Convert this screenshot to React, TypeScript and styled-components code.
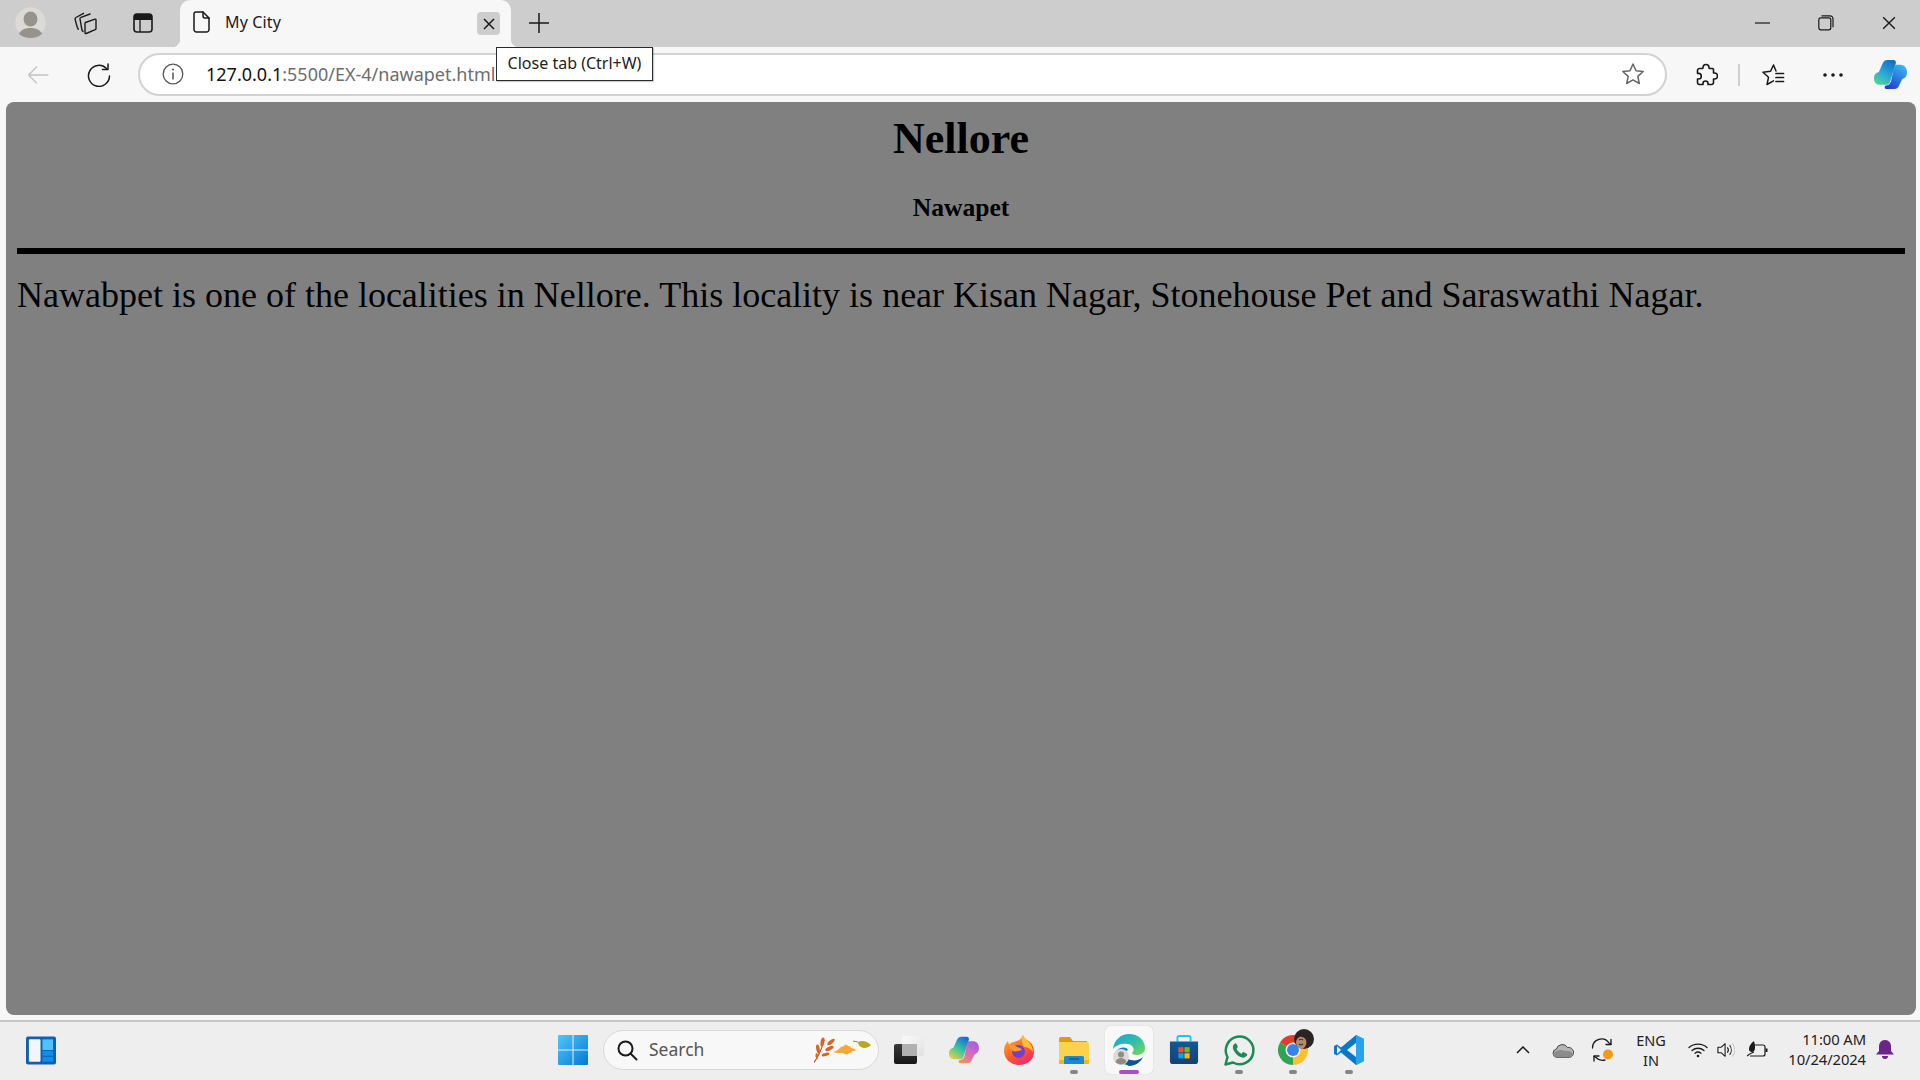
import React from "react";
import styled, { createGlobalStyle } from "styled-components";

const Global = createGlobalStyle`
  html, body { margin: 0; padding: 0; height: 100%; overflow: hidden; background: #f7f7f7; }
  #root { height: 100%; }
`;
const UI = `"Noto Sans", "Open Sans", sans-serif`;

const Frame = styled.div`
  position: relative; width: 1920px; height: 1080px; display: flex; flex-direction: column;
  background: #f7f7f7; font-family: ${UI}; color: #1a1a1a; overflow: hidden;
`;
const TabStrip = styled.div`
  height: 47px; flex: none; background: #cdcdcd; display: flex; align-items: stretch; padding-left: 8px;
`;
const Slot = styled.div<{ $w: number }>`
  width: ${(p) => p.$w}px; flex: none; display: flex; align-items: center; justify-content: center;
`;
const StripSlot = styled(Slot)`
  margin-bottom: 2px;
`;
const Tab = styled.div`
  position: relative; width: 331px; margin-left: 12px; flex: none; background: #f7f7f7;
  border-radius: 10px 10px 0 0; display: flex; align-items: center; padding-left: 8px; box-sizing: border-box;
  &::before, &::after { content: ""; position: absolute; bottom: 0; width: 8px; height: 8px; background: radial-gradient(circle at var(--c) 0, #cdcdcd 8px, #f7f7f7 8.5px); }
  &::before { left: -8px; --c: 0; }
  &::after { right: -8px; --c: 100%; }
`;
const DocSlot = styled.div`
  width: 26px; flex: none; display: flex; justify-content: center; margin-bottom: 3px;
`;
const TabTitle = styled.span`
  margin: 0 0 4px 11px; font-size: 16px; letter-spacing: 0.15px; flex: 1;
`;
const CloseBox = styled.div`
  width: 23px; height: 23px; margin-right: 11px; background: #cdcdcd; border-radius: 4px; display: flex; align-items: center; justify-content: center;
`;
const Spacer = styled.div`flex: 1;`;
const Toolbar = styled.div`
  height: 55px; flex: none; background: #f7f7f7; display: flex; align-items: center; padding-left: 8px;
`;
const AddressBar = styled.div`
  flex: 1; height: 43px; margin-left: 8px; margin-top: -1px; box-sizing: border-box; border: 2px solid #d2d2d2; border-radius: 22px;
  background: #fff; display: flex; align-items: center;
`;
const Url = styled.div`
  flex: 1; font-size: 18px; white-space: nowrap; color: #6d6d6d;
`;
const Host = styled.span`color: #111;`;
const RightTools = styled.div`
  display: flex; align-items: center; margin-left: 7px; flex: none;
`;
const Divider = styled.div`width: 2px; height: 22px; margin-left: 1px; background: #cfcfcf; flex: none;`;
const Tooltip = styled.div`
  position: absolute; left: 496px; top: 47px; width: 157px; height: 34px; box-sizing: border-box; padding-bottom: 3px;
  border: 1px solid #2a2a2a; background: #fff; font-size: 16px; display: flex; align-items: center; justify-content: center;
  box-shadow: 1px 1px 1px rgba(0,0,0,.2); color: #222;
`;
const Page = styled.main`
  height: 913px; margin: 0 4px 0 6px; flex: none; box-sizing: border-box; background: #808080; border-radius: 8px;
  padding: 0 11px; color: #000; font-family: "Liberation Serif", "Times New Roman", serif; overflow: hidden;
`;
const Title = styled.h1`
  margin: 12px 0 0; text-align: center; font-size: 44px; line-height: 50px; font-weight: 700;
`;
const Sub = styled.h3`
  margin: 29px 0 0; text-align: center; font-size: 25.6px; line-height: 30px; font-weight: 700;
`;
const Rule = styled.hr`
  margin: 25px 0 0; height: 6px; border: 0; background: #000;
`;
const Para = styled.p`
  margin: 21px 0 0; font-size: 36px; line-height: 41px; white-space: nowrap;
`;
const Taskbar = styled.footer`
  position: relative; margin-top: 5px; height: 60px; flex: none; box-sizing: border-box; background: #eeeeee; border-top: 2px solid #c6c6c6;
  display: flex; align-items: center; padding: 0 16px 2px 26px;
`;
const StartSlot = styled(Slot)`
  margin-left: 492px;
`;
const SearchBox = styled.div`
  width: 276px; height: 40px; margin-left: 5px; flex: none; box-sizing: border-box; background: #f8f8f8; border: 1px solid #d8d8d8; border-radius: 20px;
  display: flex; align-items: center; padding: 0 6px 0 12px;
`;
const SearchText = styled.span`
  margin: 0 0 2px 11px; flex: 1; font-size: 17.5px; color: #555;
`;
const AppSlot = styled.div<{ $w: number; $active?: boolean; $dot?: boolean }>`
  position: relative; width: ${(p) => p.$w}px; height: 48px; flex: none; display: flex; align-items: center; justify-content: center;
  &::before {
    content: ""; position: absolute; inset: 0 ${(p) => (p.$w - 48) / 2}px; border-radius: 5px;
    background: ${(p) => (p.$active ? "#f8f8f8" : "transparent")};
    box-shadow: ${(p) => (p.$active ? "0 0 1px rgba(0,0,0,.25)" : "none")};
  }
  &::after {
    content: ""; position: absolute; bottom: 0; left: 50%; height: 4px; border-radius: 2px; transform: translateX(-50%);
    width: ${(p) => (p.$active ? 20 : p.$dot ? 8 : 0)}px;
    background: ${(p) => (p.$active ? "#a94fc2" : "#858585")};
  }
  & > svg { position: relative; z-index: 1; overflow: visible; }
`;
const TrayPush = styled.div`margin-left: auto; display: flex; align-items: center; height: 100%;`;
const Lang = styled.div`
  width: 56px; flex: none; font-size: 14.5px; line-height: 20px; text-align: center; color: #222;
`;
const Clock = styled.div`
  width: 85px; flex: none; font-size: 14.8px; line-height: 20px; text-align: right; color: #222; white-space: nowrap; letter-spacing: -0.1px;
  margin-bottom: 2px;
`;

const S = { fill: "none", stroke: "#1a1a1a", strokeWidth: 1.5, strokeLinecap: "round" as const, strokeLinejoin: "round" as const };

const Profile = () => (
  <svg width="31" height="31" viewBox="0 0 31 31"><circle cx="15.500" cy="15.500" r="15.200" fill="#dcdad4" /><ellipse cx="15.500" cy="12" rx="7" ry="7.500" fill="#96928c" /><path d="M4 27c1.500-4 6-6 11.500-6S25.500 23 27 27c-3 2.500-7 4-11.500 4S7 29.500 4 27z" fill="#96928c" /></svg>
);
const Collections = () => (
  <svg width="24" height="24" viewBox="0 0 24 24" {...S} strokeWidth={1.4}>
    <path d="M12.500 11.500 22 8.200c.6-.2 1 .1 1 .7v8.600c0 .6-.3 1-.8 1.200l-9 3.800c-.7.300-1.200 0-1.200-.7V12.500c0-.5.100-.8.500-1z" />
    <path d="M17 3 8 6.300c-.8.300-1.100.8-1 1.600l1.800 10.500c.1.700.4 1.400 1.200 2" />
    <path d="M10.500 2.300 3 6.500c-.8.500-1.100 1-.9 1.800l2 7.500c.2.800.5 1.500 1.200 2.400" />
  </svg>
);
const VerticalTabs = () => (
  <svg width="20" height="20" viewBox="0 0 20 20"><rect x="1" y="1" width="18" height="18" rx="3" fill="none" stroke="#1a1a1a" strokeWidth="1.600" /><path d="M1 4a3 3 0 0 1 3-3h12a3 3 0 0 1 3 3v3H1z" fill="#1a1a1a" /><path d="M7 7v12" stroke="#1a1a1a" strokeWidth="1.300" /></svg>
);
const Doc = () => (
  <svg width="17" height="22" viewBox="0 0 17 22" {...S} strokeWidth={1.5}><path d="M3 1h7l6 6v11.500a2.500 2.500 0 0 1-2.500 2.500h-10A2.500 2.500 0 0 1 1 18.500V3a2 2 0 0 1 2-2z" /><path d="M10 1v4a2 2 0 0 0 2 2h4" /></svg>
);
const X = ({ s = 12, w = 1.5 }: { s?: number; w?: number }) => (
  <svg width={s} height={s} viewBox="0 0 12 12" fill="none" stroke="#1a1a1a" strokeWidth={w}><path d="M1 1l10 10M11 1 1 11" /></svg>
);
const Plus = () => (
  <svg width="20" height="20" viewBox="0 0 20 20" stroke="#1a1a1a" strokeWidth="1.500"><path d="M10 0v20M0 10h20" /></svg>
);
const Minimize = () => <svg width="15" height="2" viewBox="0 0 15 2"><path d="M0 1h15" stroke="#1a1a1a" strokeWidth="1.200" /></svg>;
const Restore = () => (
  <svg width="16" height="16" viewBox="0 0 16 16" fill="none" stroke="#1a1a1a" strokeWidth="1.200"><rect x=".8" y="2.800" width="12" height="12" rx="2" /><path d="M3.500 .8h8.500a3 3 0 0 1 3 3v8.500" /></svg>
);
const Back = () => (
  <svg width="22" height="18" viewBox="0 0 22 18" fill="none" stroke="#c4c4c4" strokeWidth="1.400" strokeLinecap="round" strokeLinejoin="round"><path d="M1.500 9h19.500M9.500 1l-8 8 8 8" /></svg>
);
const Reload = () => (
  <svg width="24" height="24" viewBox="0 0 24 24" {...S} strokeWidth={1.5}><path d="M19.500 5.500A10.500 10.500 0 1 0 22.500 13" /><path d="M21 1v5.500h-5.500" /></svg>
);
const Info = () => (
  <svg width="22" height="22" viewBox="0 0 22 22" fill="none" stroke="#555" strokeWidth="1.300"><circle cx="11" cy="11" r="9.800" /><path d="M11 9.500v7" strokeWidth="1.500" /><circle cx="11" cy="6.500" r="1" fill="#555" stroke="none" /></svg>
);
const Star = () => (
  <svg width="24" height="24" viewBox="0 0 24 24" fill="none" stroke="#666" strokeWidth="1.500" strokeLinejoin="round"><path d="M12 2l3 6.700 7.200.8-5.400 4.900 1.500 7.100L12 17.900l-6.300 3.600 1.500-7.100L1.800 9.500 9 8.700z" /></svg>
);
const Puzzle = () => (
  <svg width="24" height="24" viewBox="0 0 24 24" {...S} strokeWidth={1.6}><path d="M9 4.500a3 3 0 0 1 6 0c0 .6 0 1 .2 1h3.300a1.500 1.500 0 0 1 1 1v3.300c0 .3.500.2 1 .2a3 3 0 0 1 0 6c-.5 0-1-.1-1 .2v3.300a2 2 0 0 1-2 2h-3.300c-.3 0-.2-.5-.2-1a2.500 2.500 0 0 0-5 0c0 .5.100 1-.2 1H5.500a2 2 0 0 1-2-2v-3.300c0-.3.500-.2 1-.2a2.800 2.800 0 0 0 0-5.600c-.5 0-1 .1-1-.2V7.500a2 2 0 0 1 2-2h3.300c.2 0 .2-.4.200-1z" /></svg>
);
const Favs = () => (
  <svg width="24" height="24" viewBox="0 0 24 24" {...S} strokeWidth={1.500}><path d="M12.500 2 9.600 8.300 2 9.300l5.500 5L6 21.500l6.500-3.600M12.500 2l2.500 6" /><path d="M15 10.500h7.500M15 14.500h7.500M15 18.500h7.500" strokeWidth="1.700" /></svg>
);
const Dots = () => (
  <svg width="20" height="4" viewBox="0 0 20 4" fill="#1a1a1a"><circle cx="2" cy="2" r="1.800" /><circle cx="10" cy="2" r="1.800" /><circle cx="18" cy="2" r="1.800" /></svg>
);
const CopilotMark = ({ id, s, warm }: { id: string; s: number; warm?: boolean }) => (
  <svg width={s} height={s} viewBox="0 0 34 30">
    <defs>
      <linearGradient id={id + "a"} x1="0.2" y1="1" x2="0.8" y2="0">
        <stop offset="0" stopColor={warm ? "#e8d040" : "#4fd69a"} />
        <stop offset=".45" stopColor={warm ? "#3ec8a0" : "#2aa7d8"} />
        <stop offset="1" stopColor={warm ? "#1668d8" : "#0d6fc7"} />
      </linearGradient>
      <linearGradient id={id + "b"} x1="0.8" y1="0" x2="0.2" y2="1">
        <stop offset="0" stopColor={warm ? "#9a60e8" : "#3fb6ea"} />
        <stop offset=".6" stopColor={warm ? "#e070b0" : "#2a6fe0"} />
        <stop offset="1" stopColor={warm ? "#f59050" : "#1e3fcf"} />
      </linearGradient>
    </defs>
    <path d="M14 0h6c2 0 3 1.500 2.500 3.500L16 24c-.5 1-1.500 1.500-2.500 1.500H6C2 25.500 0 22.500 0 19c0-4 2-5.500 5-6.500l3.500-8C9.500 1.500 11.500 0 14 0z" fill={`url(#${id}a)`} />
    <path d="M22 5h5c4 0 7 3 7 8 0 4-2 6-5 7l-3 6c-1 2.500-2.500 4-5 4h-8c-2 0-2.500-2-1.500-3.500l2-.5c2 0 3-1 4-4l3-14c.2-1.500.7-2.500 1.500-2.500z" fill={`url(#${id}b)`} />
  </svg>
);
const Widgets = () => (
  <svg width="31" height="29" viewBox="0 0 31 29"><rect width="31" height="29" rx="2" fill="#0f5fb3" /><rect x="3" y="3" width="12" height="23" rx="1" fill="#f2f5f9" /><rect x="17" y="3" width="11" height="11" fill="#4ec3fa" /><rect x="17" y="15" width="11" height="5" fill="#0f8fe8" /><rect x="17" y="21" width="11" height="5" fill="#0f8fe8" /></svg>
);
const WinLogo = () => (
  <svg width="30" height="30" viewBox="0 0 30 30">
    <defs><linearGradient id="wl" x1="0" y1="0" x2="1" y2="1"><stop offset="0" stopColor="#4fc8fa" /><stop offset="1" stopColor="#0478d4" /></linearGradient></defs>
    <path d="M0 1a1 1 0 0 1 1-1h13.500v14.500H0zM15.500 0H29a1 1 0 0 1 1 1v13.500H15.500zM0 15.500h14.500V30H1a1 1 0 0 1-1-1zM15.500 15.500H30V29a1 1 0 0 1-1 1H15.500z" fill="url(#wl)" />
  </svg>
);
const Glass = () => (
  <svg width="22" height="22" viewBox="0 0 22 22" fill="none" stroke="#1a1a1a" strokeWidth="2" strokeLinecap="round"><circle cx="9.500" cy="9.500" r="7" /><path d="M14.500 14.500l6 6" /></svg>
);
const Leaves = () => (
  <svg width="58" height="26" viewBox="0 0 58 26">
    <path d="M0 25.500C4 20 8 12 10 3" stroke="#b8401c" strokeWidth="1.100" fill="none" />
    <g fill="#dc6420">
      <ellipse cx="8.500" cy="5" rx="1.900" ry="4.500" transform="rotate(10 8.500 5)" />
      <ellipse cx="17" cy="5" rx="1.800" ry="4.500" transform="rotate(50 17 5)" />
      <ellipse cx="15.500" cy="11.500" rx="1.800" ry="4.500" transform="rotate(65 15.500 11.500)" />
      <ellipse cx="4" cy="12" rx="1.800" ry="4.500" transform="rotate(-10 4 12)" />
      <ellipse cx="11.500" cy="17.500" rx="1.600" ry="4" transform="rotate(75 11.500 17.500)" />
      <ellipse cx="2.800" cy="19" rx="1.300" ry="3" transform="rotate(-5 2.800 19)" />
    </g>
    <path d="M19 15c3-1 5-2 7-4 1-2 3-1 4-2 1-2 3-1 4 0 2 0 3 1 3 2 2 0 4 1 5 2-1 1-3 1-4 1 0 2-2 2-3 2-1 1-3 2-4 1-1 0-2-1-3-1-3 0-6 0-9-1z" fill="#f7a838" />
    <path d="M39 4l5 1" stroke="#9c8a18" strokeWidth="1" />
    <path d="M44 5c4-2 9-1 13 3-3 3-7 4-10 2-2-1-3-3-3-5z" fill="#b9a71e" />
  </svg>
);
const TaskSwitch = () => (
  <svg width="30" height="28" viewBox="0 0 30 28">
    <defs><linearGradient id="ts" x1="0" y1="0" x2="1" y2="1"><stop offset="0" stopColor="#fafafa" /><stop offset="1" stopColor="#e0e0e0" /></linearGradient><linearGradient id="td" x1="0" y1="0" x2="0" y2="1"><stop offset="0" stopColor="#3a3a3a" /><stop offset="1" stopColor="#161616" /></linearGradient></defs>
    <rect x="0" y="8" width="23" height="20" rx="2" fill="url(#td)" />
    <rect x="8" y="0" width="22" height="20" rx="2" fill="url(#ts)" />
    <rect x="8" y="8" width="15" height="12" fill="#b0b0b0" />
  </svg>
);
const Firefox = () => (
  <svg width="30" height="30" viewBox="0 0 30 30">
    <defs>
      <linearGradient id="ff" x1="0.2" y1="0" x2="0.8" y2="1"><stop offset="0" stopColor="#ffb020" /><stop offset=".55" stopColor="#ff5a2a" /><stop offset="1" stopColor="#f0207a" /></linearGradient>
    </defs>
    <path d="M19 0c1 4 5 5 8 8 3 4 3 8 3 9 0 8-7 13-15 13S0 24 0 16c0-4 1-7 4-10l1 4c2-3 5-3 8-4 3-1 5-3 6-6z" fill="url(#ff)" />
    <path d="M18 0c2 4 7 6 9 10 1 3 2 5 2 7-2-3-5-5-9-5-2-3-3-8-2-12z" fill="#ffc030" />
    <circle cx="14.500" cy="16.500" r="6.500" fill="#6f3fd0" />
    <path d="M5 9c3 0 6 1 8 3 2 .5 4 1 5 3-3 1-7 2-9 1-2-1-4-3-4-7z" fill="#ff9a28" />
  </svg>
);
const Files = () => (
  <svg width="30" height="27" viewBox="0 0 30 27">
    <path d="M0 2a2 2 0 0 1 2-2h9l3 4h14v6H0z" fill="#dc9c10" />
    <path d="M0 5h28a2 2 0 0 1 2 2v20H0z" fill="#fbd24c" />
    <path d="M0 23h30v4H0z" fill="#f3b61f" />
    <path d="M5 20.500a1.500 1.500 0 0 1 1.500-1.500h17a1.500 1.500 0 0 1 1.500 1.500V27H5z" fill="#1a8ad0" />
    <path d="M10 22h10" stroke="#0c5a96" strokeWidth="1.500" />
  </svg>
);
const Edge = () => (
  <svg width="32" height="32" viewBox="0 0 32 32">
    <defs>
      <linearGradient id="eg" x1="0" y1="0" x2="1" y2="1"><stop offset="0" stopColor="#1ba0e0" /><stop offset=".55" stopColor="#35c1a1" /><stop offset="1" stopColor="#7ed957" /></linearGradient>
      <linearGradient id="eb" x1="0" y1="0" x2="1" y2="0"><stop offset="0" stopColor="#0c59a4" /><stop offset="1" stopColor="#114a8b" /></linearGradient>
    </defs>
    <path d="M0 15C1 6 8 0 16 0c9 0 16 6 16 14 0 5-4 7-8 7-3 0-5-1-5-2 3-2 2-8-4-9C9 9 3 11 0 15z" fill="url(#eg)" />
    <path d="M14 31c-6-1-12-6-12-12 3-6 11-7 13-3-4 2-6 6-4 10 2 4 8 5 13 3-3 2-6 3-10 2z" fill="#1a7cc8" />
    <path d="M16 32c6 0 12-4 14-9-3 3-8 4-12 3-3-.5-5-2-7-4 0 5 2 9 5 10z" fill="url(#eb)" />
    <circle cx="8" cy="23" r="8" fill="#dcdad6" />
    <circle cx="8" cy="20.500" r="3" fill="#8f8b85" />
    <path d="M2.500 28c1-3 3-4 5.500-4s4.500 1 5.500 4c-1.500 1.500-3.500 2.500-5.500 2.500S4 29.500 2.500 28z" fill="#8f8b85" />
  </svg>
);
const Store = () => (
  <svg width="30" height="30" viewBox="0 0 30 32">
    <defs><linearGradient id="st" x1="0" y1="0" x2="0" y2="1"><stop offset="0" stopColor="#0f5a9c" /><stop offset="1" stopColor="#17406f" /></linearGradient></defs>
    <path d="M8 7V3a2 2 0 0 1 2-2h10a2 2 0 0 1 2 2v4" fill="none" stroke="#26c0f0" strokeWidth="2" />
    <path d="M0 7h30v21a3 3 0 0 1-3 3H3a3 3 0 0 1-3-3z" fill="url(#st)" />
    <rect x="9" y="13" width="5.500" height="5.500" fill="#f25022" /><rect x="15.500" y="13" width="5.500" height="5.500" fill="#7fba00" />
    <rect x="9" y="19.500" width="5.500" height="5.500" fill="#00a4ef" /><rect x="15.500" y="19.500" width="5.500" height="5.500" fill="#ffb900" />
  </svg>
);
const WhatsApp = () => (
  <svg width="31" height="31" viewBox="0 0 31 31">
    <path d="M1.500 29.500l2-7.500A13.800 13.800 0 1 1 9 27.500z" fill="none" stroke="#1d8a55" strokeWidth="2.500" strokeLinejoin="round" />
    <path d="M11 8.500c-1.500.8-2.500 2.500-2 5 .8 3.500 5 8 9 9 2 .5 4-.5 5-2 .4-.8.300-1.500-.2-1.800l-3-1.500c-.5-.2-1-.1-1.300.3l-1 1.200c-2-.7-4-2.700-5-5l1-1.200c.3-.4.400-.8.200-1.300L12.500 9c-.3-.6-.9-.8-1.500-.5z" fill="#1d8a55" />
  </svg>
);
const Chrome = () => (
  <svg width="42" height="40" viewBox="0 0 42 40">
    <path d="M21 20 8 12.500A15 15 0 0 1 34 12.500z" fill="#e33b2e" />
    <path d="M21 20 34 12.500A15 15 0 0 1 21 35z" fill="#fbc02d" />
    <path d="M21 20V35A15 15 0 0 1 8 12.500z" fill="#32a350" />
    <circle cx="21" cy="20" r="7.500" fill="#f6f6f6" />
    <circle cx="21" cy="20" r="6" fill="#3b82e6" />
    <circle cx="32" cy="9" r="10" fill="#2c2420" />
    <path d="M24 12c.5-3 3-6 6-5 1 0 3 1 4 3 1 3 0 6-2 8-2 1.500-4 1-5 0-2-1-3-3-3-6z" fill="#b88a70" />
    <path d="M27 10c1-1 3-1 4 0M27 14c1 1 3 1 4 0" stroke="#4a3028" strokeWidth="1.200" fill="none" />
  </svg>
);
const VSCode = () => (
  <svg width="30" height="30" viewBox="0 0 30 30">
    <path d="M22 0 30 4v22l-8 4-15-12.500L3 20.500 0 19v-8l3-1.500 4 3z" fill="#0a78c8" />
    <path d="M22 0l8 4v22l-8 4z" fill="#28a4ec" />
    <path d="M22 8l-9 7 9 7z" fill="#eeeeee" />
    <path d="M3 11v8l4-4z" fill="#eeeeee" />
  </svg>
);
const Chevron = () => <svg width="14" height="8" viewBox="0 0 14 8" fill="none" stroke="#1a1a1a" strokeWidth="1.500"><path d="M1 7l6-6 6 6" /></svg>;
const Cloud = () => (
  <svg width="22" height="15" viewBox="0 0 22 15"><path d="M5 14.500a4.300 4.300 0 0 1-.5-8.500 6 6 0 0 1 11-1.500A5 5 0 0 1 17.500 14.500z" fill="#b5b5b5" stroke="#444" strokeWidth="1" /><path d="M1 11c3-4 8-5 12-3 3-1 6 0 8 3-1 2-2 3.500-3.500 3.500H5C3 14.500 1.500 13 1 11z" fill="#8b8b8b" /></svg>
);
const Sync = () => (
  <svg width="24" height="24" viewBox="0 0 24 24" fill="none" stroke="#1a1a1a" strokeWidth="1.300" strokeLinecap="round" strokeLinejoin="round">
    <path d="M1.500 10A9 9 0 0 1 18 5l2 1" /><path d="M20 1.500V6.500h-5" />
    <path d="M14 22a9 9 0 0 1-9-2.500l-2-1" /><path d="M3 23v-5h5" />
    <circle cx="17" cy="16.500" r="5" fill="#f59a14" stroke="none" />
  </svg>
);
const Wifi = () => (
  <svg width="20" height="16" viewBox="0 0 20 16" fill="none" stroke="#1a1a1a" strokeWidth="1.300" strokeLinecap="round"><path d="M1 5.500c5-4.600 13-4.600 18 0M4 8.500c3.500-3 8.500-3 12 0M7 11.200c1.800-1.400 4.200-1.400 6 0" /><circle cx="10" cy="14" r="1.300" fill="#1a1a1a" stroke="none" /></svg>
);
const Volume = () => (
  <svg width="20" height="18" viewBox="0 0 20 18" fill="none" strokeLinejoin="round"><path d="M1 6h3.500L9 2v14l-4.500-4H1z" stroke="#1a1a1a" strokeWidth="1.200" /><path d="M11.500 6c1.400 1.800 1.400 4.200 0 6" stroke="#1a1a1a" strokeWidth="1.200" /><path d="M14 3.500c2.500 3.200 2.500 7.800 0 11" stroke="#333" strokeWidth="1.200" /><path d="M17 1.500c3.500 4.500 3.500 10.500 0 15" stroke="#c8c8c8" strokeWidth="1.200" /></svg>
);
const Battery = () => (
  <svg width="22" height="18" viewBox="0 0 22 18" fill="none"><path d="M4 4h12a2 2 0 0 1 2 2v7a2 2 0 0 1-2 2H3" stroke="#1a1a1a" strokeWidth="1.200" /><path d="M18.500 7.500h2v3.500h-2" fill="#1a1a1a" /><path d="M7 0C4 2 2 5 2 8c0 2 1 3 3 3 3 0 4-4 2-11z" fill="#1a1a1a" /><path d="M0 15c2-2 4-3 7-4" stroke="#1a1a1a" strokeWidth="1.200" /></svg>
);
const Bell = () => (
  <svg width="18" height="20" viewBox="0 0 18 20"><path d="M9 0c4 0 6 3 6 6.500V11l3 3.500H0L3 11V6.500C3 3 5 0 9 0z" fill="#6b2488" /><path d="M6 16h6a3 3 0 0 1-6 0z" fill="#6b2488" /></svg>
);

export default function App() {
  return (
    <Frame>
      <Global />
      <TabStrip>
        <StripSlot $w={44}><Profile /></StripSlot>
        <StripSlot $w={66}><Collections /></StripSlot>
        <StripSlot $w={50}><VerticalTabs /></StripSlot>
        <Tab>
          <DocSlot><Doc /></DocSlot>
          <TabTitle>My City</TabTitle>
          <CloseBox><X /></CloseBox>
        </Tab>
        <StripSlot $w={56}><Plus /></StripSlot>
        <Spacer />
        <StripSlot $w={63}><Minimize /></StripSlot>
        <StripSlot $w={63}><Restore /></StripSlot>
        <StripSlot $w={63}><X s={14} w={1.2} /></StripSlot>
      </TabStrip>
      <Toolbar>
        <Slot $w={60}><Back /></Slot>
        <Slot $w={62}><Reload /></Slot>
        <AddressBar>
          <Slot $w={66}><Info /></Slot>
          <Url><Host>127.0.0.1</Host>:5500/EX-4/nawapet.html</Url>
          <Slot $w={64}><Star /></Slot>
        </AddressBar>
        <RightTools>
          <Slot $w={63}><Puzzle /></Slot>
          <Divider />
          <Slot $w={65}><Favs /></Slot>
          <Slot $w={56}><Dots /></Slot>
          <Slot $w={59}><CopilotMark id="cp1" s={33} /></Slot>
        </RightTools>
      </Toolbar>
      <Tooltip>Close tab (Ctrl+W)</Tooltip>
      <Page>
        <Title>Nellore</Title>
        <Sub>Nawapet</Sub>
        <Rule />
        <Para>Nawabpet is one of the localities in Nellore. This locality is near Kisan Nagar, Stonehouse Pet and Saraswathi Nagar.</Para>
      </Page>
      <Taskbar>
        <Slot $w={30}><Widgets /></Slot>
        <StartSlot $w={50}><WinLogo /></StartSlot>
        <SearchBox>
          <Glass />
          <SearchText>Search</SearchText>
          <Leaves />
        </SearchBox>
        <AppSlot $w={60}><TaskSwitch /></AppSlot>
        <AppSlot $w={50}><CopilotMark id="cp2" s={30} warm /></AppSlot>
        <AppSlot $w={60}><Firefox /></AppSlot>
        <AppSlot $w={50} $dot><Files /></AppSlot>
        <AppSlot $w={60} $active><Edge /></AppSlot>
        <AppSlot $w={49}><Store /></AppSlot>
        <AppSlot $w={62} $dot><WhatsApp /></AppSlot>
        <AppSlot $w={46} $dot><Chrome /></AppSlot>
        <AppSlot $w={66} $dot><VSCode /></AppSlot>
        <TrayPush>
          <Slot $w={40}><Chevron /></Slot>
          <Slot $w={40}><Cloud /></Slot>
          <Slot $w={40}><Sync /></Slot>
          <Lang>ENG<br />IN</Lang>
          <Slot $w={38}><Wifi /></Slot>
          <Slot $w={18}><Volume /></Slot>
          <Slot $w={46}><Battery /></Slot>
          <Clock>11:00 AM<br />10/24/2024</Clock>
          <Slot $w={38}><Bell /></Slot>
        </TrayPush>
      </Taskbar>
    </Frame>
  );
}
